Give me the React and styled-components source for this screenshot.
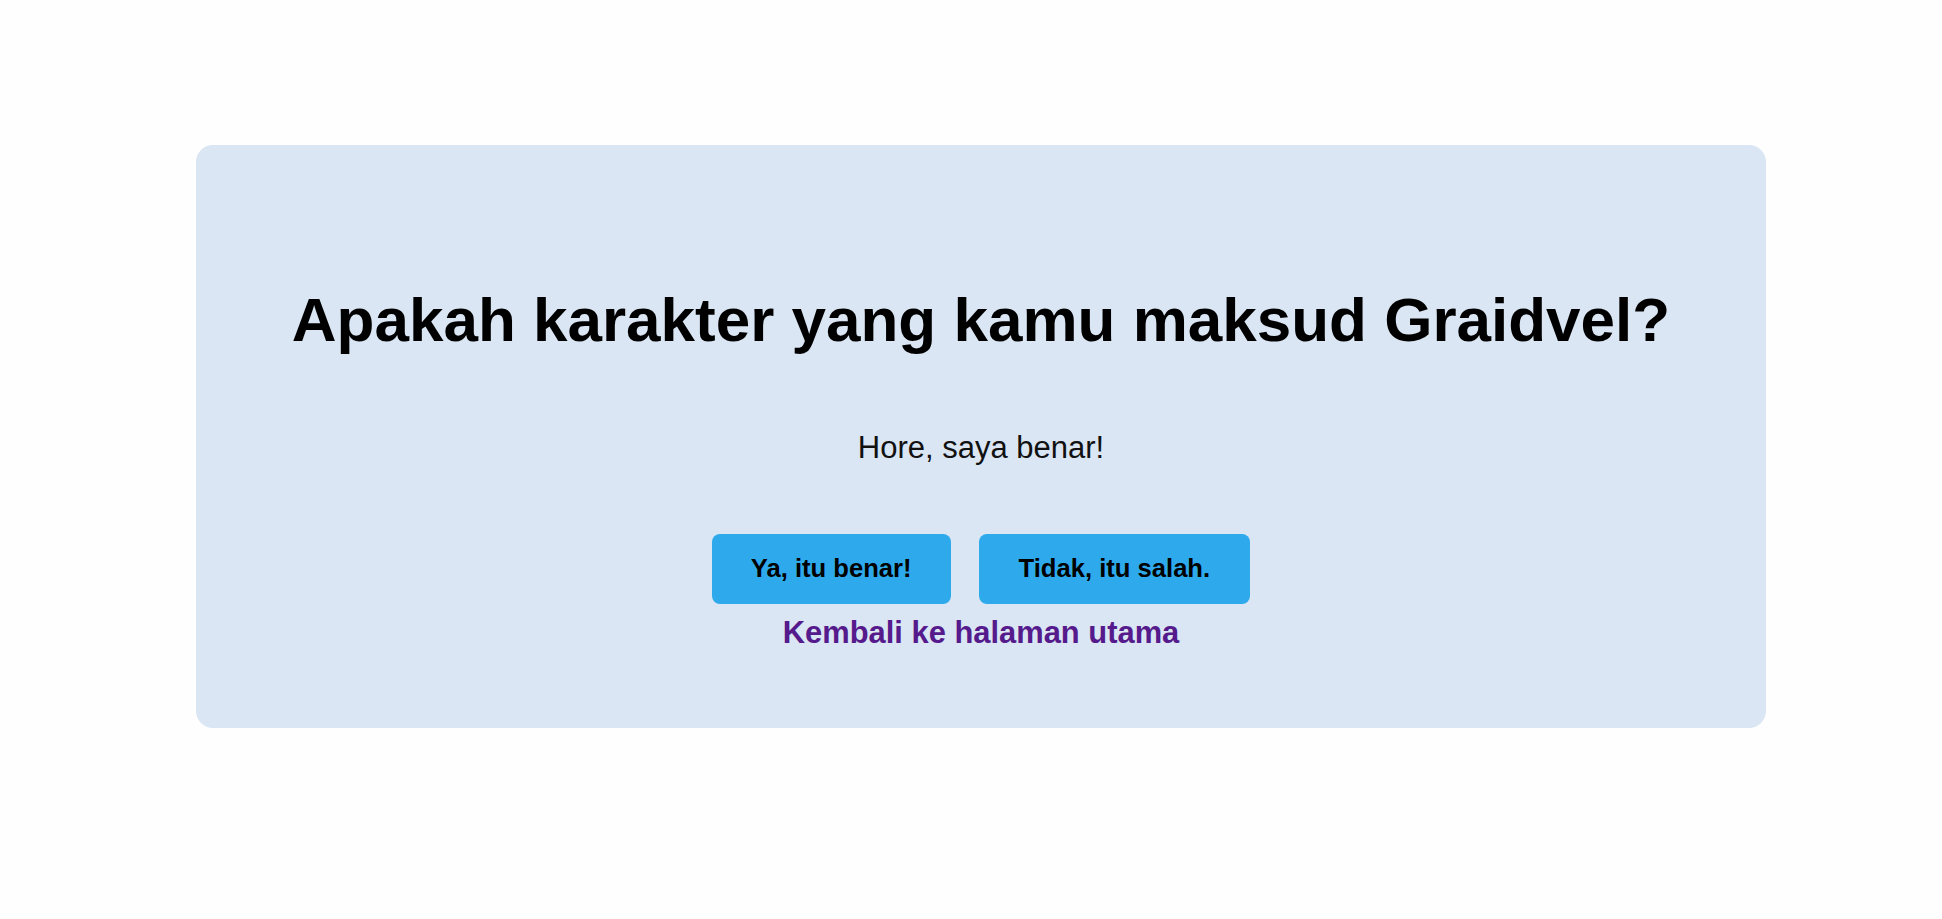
import React from 'react';
import styled, { createGlobalStyle } from 'styled-components';

const GlobalStyle = createGlobalStyle`
  body {
    margin: 0;
    background-color: #fefefe;
    font-family: "Liberation Sans", Arial, sans-serif;
  }
`;

const Page = styled.div`
  padding-top: 145px;
  padding-left: 196px;
  padding-right: 176px;
  min-height: 919px;
  box-sizing: border-box;
`;

const Card = styled.div`
  background-color: #dae6f3;
  border-radius: 17px;
  padding: 138px 40px 77px;
  display: flex;
  flex-direction: column;
  align-items: center;
`;

const Title = styled.h1`
  margin: 0;
  font-size: 62px;
  line-height: 1.2;
  font-weight: bold;
  color: #000;
  text-align: center;
`;

const Message = styled.p`
  margin: 72px 0 0;
  font-size: 31px;
  line-height: 1.2;
  color: #111;
`;

const ButtonRow = styled.div`
  display: flex;
  gap: 28px;
  margin-top: 67px;
`;

const Button = styled.button`
  height: 70px;
  padding: 0 ${(p) => p.$pad}px;
  border: none;
  border-radius: 8px;
  background-color: #2eaaec;
  color: #000;
  font-family: "Liberation Sans", Arial, sans-serif;
  font-size: 25.6px;
  font-weight: bold;
  cursor: pointer;
`;

const HomeLink = styled.a`
  margin-top: 10px;
  font-size: 30.9px;
  line-height: 1.2;
  font-weight: bold;
  color: #551a8b;
  text-decoration: none;
`;

const App = () => (
  <>
    <GlobalStyle />
    <Page>
      <Card>
        <Title>Apakah karakter yang kamu maksud Graidvel?</Title>
        <Message>Hore, saya benar!</Message>
        <ButtonRow>
          <Button $pad={39}>Ya, itu benar!</Button>
          <Button $pad={40}>Tidak, itu salah.</Button>
        </ButtonRow>
        <HomeLink href="#">Kembali ke halaman utama</HomeLink>
      </Card>
    </Page>
  </>
);

export default App;
